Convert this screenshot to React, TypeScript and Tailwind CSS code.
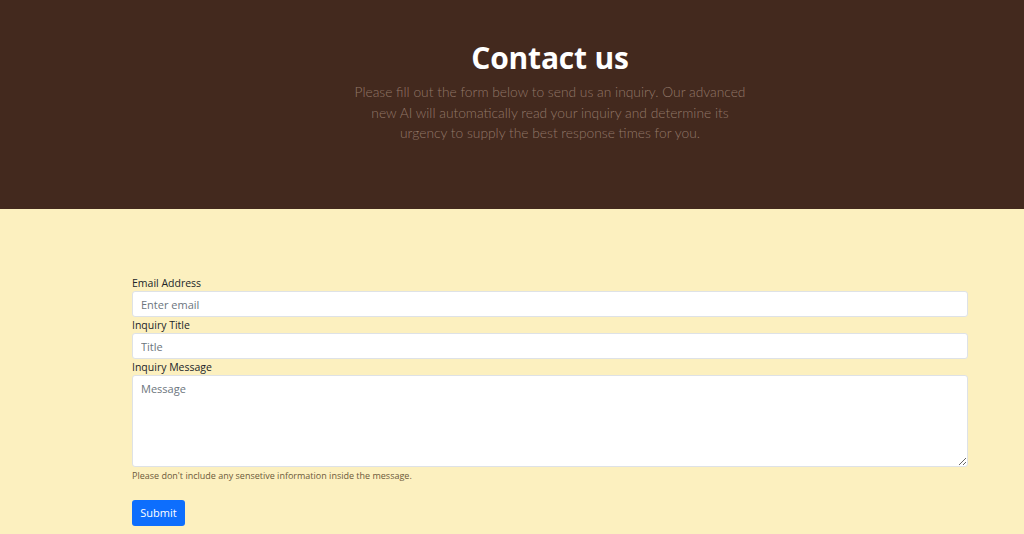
export default function App() {
  return (
    <div className="min-h-[534px] bg-[#fcf0bf] font-['Open_Sans',sans-serif]">
      {/* Hero */}
      <header className="h-[209px] bg-[#43291e] pl-[132px] pr-[56px] pt-[38px] flex flex-col items-center">
        <h1 className="text-[30px] font-bold leading-[40px] text-white tracking-[-0.2px]">Contact us</h1>
        <p className="mt-[4px] whitespace-nowrap text-center font-['Lato',sans-serif] text-[13.8px] leading-[20.5px] font-light text-[#927768]">
          Please fill out the form below to send us an inquiry. Our advanced
          <br />
          new AI will automatically read your inquiry and determine its
          <br />
          urgency to supply the best response times for you.
        </p>
      </header>

      {/* Form */}
      <form className="pl-[132px] pr-[56px] pt-[66px] flex flex-col" onSubmit={(e) => e.preventDefault()}>
        <label className="text-[10.5px] leading-[16px] text-[#212529]">Email Address</label>
        <input
          type="email"
          placeholder="Enter email"
          className="h-[26px] rounded-[3px] border border-[#dee2e6] bg-white px-[8px] text-[11px] text-[#212529] placeholder:text-[#6c757d] outline-none"
        />
        <label className="text-[10.5px] leading-[16px] text-[#212529]">Inquiry Title</label>
        <input
          type="text"
          placeholder="Title"
          className="h-[26px] rounded-[3px] border border-[#dee2e6] bg-white px-[8px] text-[11px] text-[#212529] placeholder:text-[#6c757d] outline-none"
        />
        <label className="text-[10.5px] leading-[16px] text-[#212529]">Inquiry Message</label>
        <textarea
          placeholder="Message"
          className="h-[92px] rounded-[3px] border border-[#dee2e6] bg-white px-[8px] py-[5px] text-[11px] text-[#212529] placeholder:text-[#6c757d] outline-none"
        />
        <p className="mt-[2px] text-[9px] leading-[14px] text-[#6c5a3a]">
          Please don't include any sensetive information inside the message.
        </p>
        <div className="mt-[16px]">
          <button type="submit" className="h-[26px] w-[53px] rounded-[3px] bg-[#0d6efd] text-[11px] text-white">
            Submit
          </button>
        </div>
      </form>
    </div>
  );
}
